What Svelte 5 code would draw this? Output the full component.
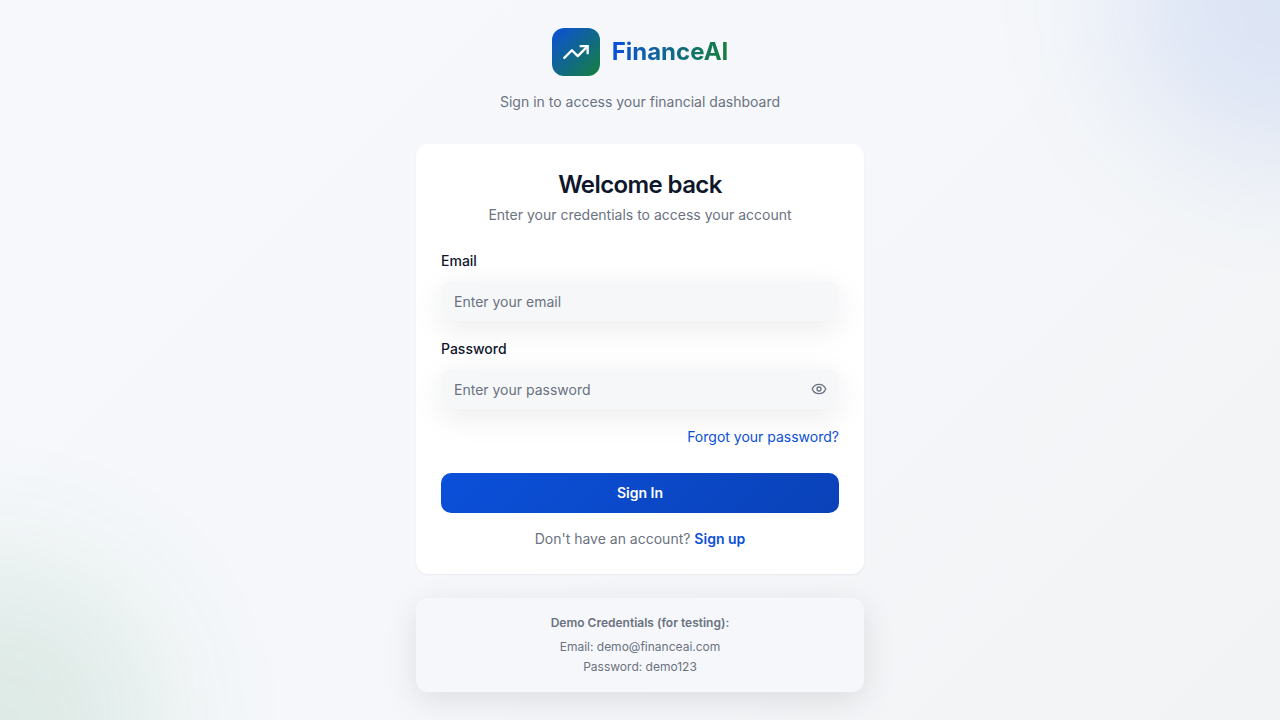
<script>
  let email = $state('');
  let password = $state('');
  let showPassword = $state(false);
</script>

<main class="page">
  <div class="glow glow-top"></div>
  <div class="glow glow-bottom"></div>

  <div class="column">
    <header class="intro">
      <div class="brand">
        <span class="logo">
          <svg width="28" height="28" viewBox="0 0 24 24" fill="none" stroke="currentColor" stroke-width="2" stroke-linecap="round" stroke-linejoin="round" aria-hidden="true">
            <path d="M16 7h6v6" />
            <path d="m22 7-8.5 8.5-5-5L2 17" />
          </svg>
        </span>
        <span class="name">FinanceAI</span>
      </div>
      <p class="muted">Sign in to access your financial dashboard</p>
    </header>

    <section class="card">
      <h1>Welcome back</h1>
      <p class="muted">Enter your credentials to access your account</p>

      <form onsubmit={(e) => e.preventDefault()}>
        <div class="field">
          <label for="email">Email</label>
          <input id="email" type="email" placeholder="Enter your email" bind:value={email} />
        </div>
        <div class="field">
          <label for="password">Password</label>
          <div class="password">
            <input id="password" type={showPassword ? 'text' : 'password'} placeholder="Enter your password" bind:value={password} />
            <button type="button" class="reveal" aria-label="Show password" onclick={() => (showPassword = !showPassword)}>
              <svg width="16" height="16" viewBox="0 0 24 24" fill="none" stroke="currentColor" stroke-width="2" stroke-linecap="round" stroke-linejoin="round" aria-hidden="true">
                <path d="M2.062 12.348a1 1 0 0 1 0-.696 10.75 10.75 0 0 1 19.876 0 1 1 0 0 1 0 .696 10.75 10.75 0 0 1-19.876 0" />
                <circle cx="12" cy="12" r="3" />
              </svg>
            </button>
          </div>
        </div>
        <div class="forgot"><a href="#forgot">Forgot your password?</a></div>
        <button type="submit" class="submit">Sign In</button>
      </form>

      <p class="muted signup">Don't have an account? <a href="#signup">Sign up</a></p>
    </section>

    <aside class="demo">
      <p class="demo-title">Demo Credentials (for testing):</p>
      <p>Email: demo@financeai.com</p>
      <p>Password: demo123</p>
    </aside>
  </div>
</main>

<style>
  :global(body) {
    margin: 0;
  }
  .page,
  .page * {
    box-sizing: border-box;
  }
  .page {
    position: relative;
    display: flex;
    align-items: center;
    justify-content: center;
    min-height: 100vh;
    padding: 16px;
    overflow: hidden;
    background: linear-gradient(135deg, #f6f8fb 0%, #f5f7fa 50%, #f2f3f5 100%);
    color: #0f172a;
    font-family: Inter, sans-serif;
    font-size: 14px;
    line-height: 20px;
  }
  .glow {
    position: absolute;
    width: 320px;
    height: 320px;
    border-radius: 50%;
    filter: blur(64px);
  }
  .glow-top {
    top: -160px;
    right: -160px;
    background: rgba(10, 80, 220, 0.1);
  }
  .glow-bottom {
    bottom: -160px;
    left: -160px;
    background: rgba(22, 128, 61, 0.1);
  }
  .column {
    position: relative;
    width: 100%;
    max-width: 448px;
  }
  p,
  h1 {
    margin: 0;
  }
  a {
    color: #0b50da;
    text-decoration: none;
  }
  .muted {
    color: #6b7280;
  }
  .intro {
    margin-bottom: 32px;
    text-align: center;
  }
  .brand {
    display: flex;
    align-items: center;
    justify-content: center;
    gap: 12px;
    margin-bottom: 16px;
  }
  .logo {
    display: grid;
    place-items: center;
    width: 48px;
    height: 48px;
    border-radius: 12px;
    background: linear-gradient(135deg, #0b50da, #16803d);
    color: #fff;
  }
  .name {
    background: linear-gradient(90deg, #0b50da, #16803d);
    background-clip: text;
    -webkit-background-clip: text;
    color: transparent;
    font-size: 24px;
    font-weight: 700;
    line-height: 32px;
  }
  .card {
    padding: 24px;
    border: 1px solid #fff;
    border-radius: 12px;
    background: #fff;
    box-shadow: 0 1px 2px rgba(0, 0, 0, 0.05);
    text-align: center;
  }
  h1 {
    margin-bottom: 4px;
    font-size: 24px;
    font-weight: 600;
    line-height: 32px;
    letter-spacing: -0.025em;
  }
  form {
    display: flex;
    flex-direction: column;
    gap: 16px;
    margin: 24px 0 16px;
    text-align: left;
  }
  .field {
    display: flex;
    flex-direction: column;
    gap: 8px;
  }
  label {
    font-weight: 500;
    line-height: 24px;
  }
  input {
    display: block;
    width: 100%;
    height: 40px;
    padding: 8px 12px;
    border: 1px solid rgba(255, 255, 255, 0.2);
    border-radius: 10px;
    background: #f5f7f9;
    box-shadow: 0 8px 32px rgba(0, 0, 0, 0.08);
    color: inherit;
    font: inherit;
  }
  input::placeholder {
    color: #6b7280;
    opacity: 1;
  }
  .password {
    position: relative;
  }
  .password input {
    padding-right: 40px;
  }
  .reveal {
    position: absolute;
    top: 0;
    right: 0;
    display: grid;
    place-items: center;
    width: 40px;
    height: 40px;
    padding: 0;
    border: 0;
    background: none;
    color: #6b7280;
    cursor: pointer;
  }
  .forgot {
    line-height: 24px;
    text-align: right;
  }
  .submit {
    height: 40px;
    margin-top: 8px;
    border: 0;
    border-radius: 10px;
    background: linear-gradient(135deg, #0b50da, #0a42b8);
    color: #fff;
    font: inherit;
    font-weight: 600;
    cursor: pointer;
  }
  .signup a {
    font-weight: 600;
  }
  .demo {
    display: flex;
    flex-direction: column;
    gap: 4px;
    margin-top: 24px;
    padding: 16px;
    border: 1px solid rgba(255, 255, 255, 0.2);
    border-radius: 12px;
    background: #f5f7fa;
    box-shadow: 0 8px 32px rgba(0, 0, 0, 0.1);
    color: #6b7280;
    font-size: 12px;
    line-height: 16px;
    text-align: center;
  }
  .demo-title {
    margin-bottom: 4px;
    font-weight: 600;
  }
</style>
